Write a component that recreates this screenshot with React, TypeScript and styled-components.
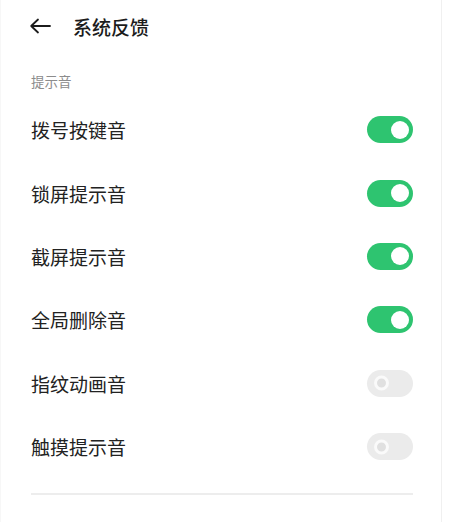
import React from "react";
import styled, { createGlobalStyle } from "styled-components";

const Global = createGlobalStyle`
  html, body { margin: 0; padding: 0; background: #ffffff; }
  body { font-family: "Noto Sans CJK SC", "Noto Sans", sans-serif; }
`;

const Page = styled.div`
  width: 440px;
  min-height: 522px;
  border-right: 1px solid #f0f0f0;
  border-left: 1px solid #f7f7f7;
  background: #fff;
  overflow: hidden;
`;

const Header = styled.div`
  height: 52px;
  display: flex;
  align-items: center;
  padding-left: 28px;
  gap: 22px;
`;

const Title = styled.div`
  font-size: 19px;
  font-weight: 500;
  color: #1c1c1c;
  line-height: 1;
`;

const SectionLabel = styled.div`
  margin-top: 19px;
  padding-left: 30px;
  font-size: 13.5px;
  line-height: 20px;
  color: #8c8c8c;
`;

const List = styled.div`
  margin-top: 7px;
  display: flex;
  flex-direction: column;
`;

const Row = styled.div`
  height: 63.4px;
  display: flex;
  align-items: center;
  justify-content: space-between;
  padding: 0 28px 0 30px;
`;

const RowText = styled.div`
  font-size: 19px;
  color: #222;
  line-height: 1;
`;

const Track = styled.div<{ $on: boolean }>`
  position: relative;
  width: 46px;
  height: 27px;
  border-radius: 14px;
  background: ${(p) => (p.$on ? "#2ec470" : "#ebebeb")};
  flex-shrink: 0;
`;

const Knob = styled.div<{ $on: boolean }>`
  position: absolute;
  top: 50%;
  transform: translateY(-50%);
  box-sizing: border-box;
  border-radius: 50%;
  ${(p) =>
    p.$on
      ? `right: 4px; width: 18px; height: 18px; background: #fff;`
      : `left: 7px; width: 15px; height: 15px; background: #e0e0e0; border: 3px solid #fafafa;`}
`;

const Divider = styled.div`
  margin: 15px 28px 0 30px;
  height: 2px;
  background: #ededed;
`;

const BottomLabel = styled.div`
  margin-top: 24px;
  padding-left: 30px;
  font-size: 13.5px;
  line-height: 20px;
  color: #b0b0b0;
`;

const items: { label: string; on: boolean }[] = [
  { label: "拨号按键音", on: true },
  { label: "锁屏提示音", on: true },
  { label: "截屏提示音", on: true },
  { label: "全局删除音", on: true },
  { label: "指纹动画音", on: false },
  { label: "触摸提示音", on: false },
];

function BackArrow() {
  return (
    <svg width="22" height="16" viewBox="0 0 22 16" fill="none">
      <path
        d="M21 8H2.5M9 1.5L2.2 8L9 14.5"
        stroke="#1c1c1c"
        strokeWidth="1.8"
        strokeLinecap="round"
        strokeLinejoin="round"
      />
    </svg>
  );
}

export default function App() {
  return (
    <Page>
      <Global />
      <Header>
        <BackArrow />
        <Title>系统反馈</Title>
      </Header>
      <SectionLabel>提示音</SectionLabel>
      <List>
        {items.map((it) => (
          <Row key={it.label}>
            <RowText>{it.label}</RowText>
            <Track $on={it.on}>
              <Knob $on={it.on} />
            </Track>
          </Row>
        ))}
      </List>
      <Divider />
      <BottomLabel>其他</BottomLabel>
    </Page>
  );
}
